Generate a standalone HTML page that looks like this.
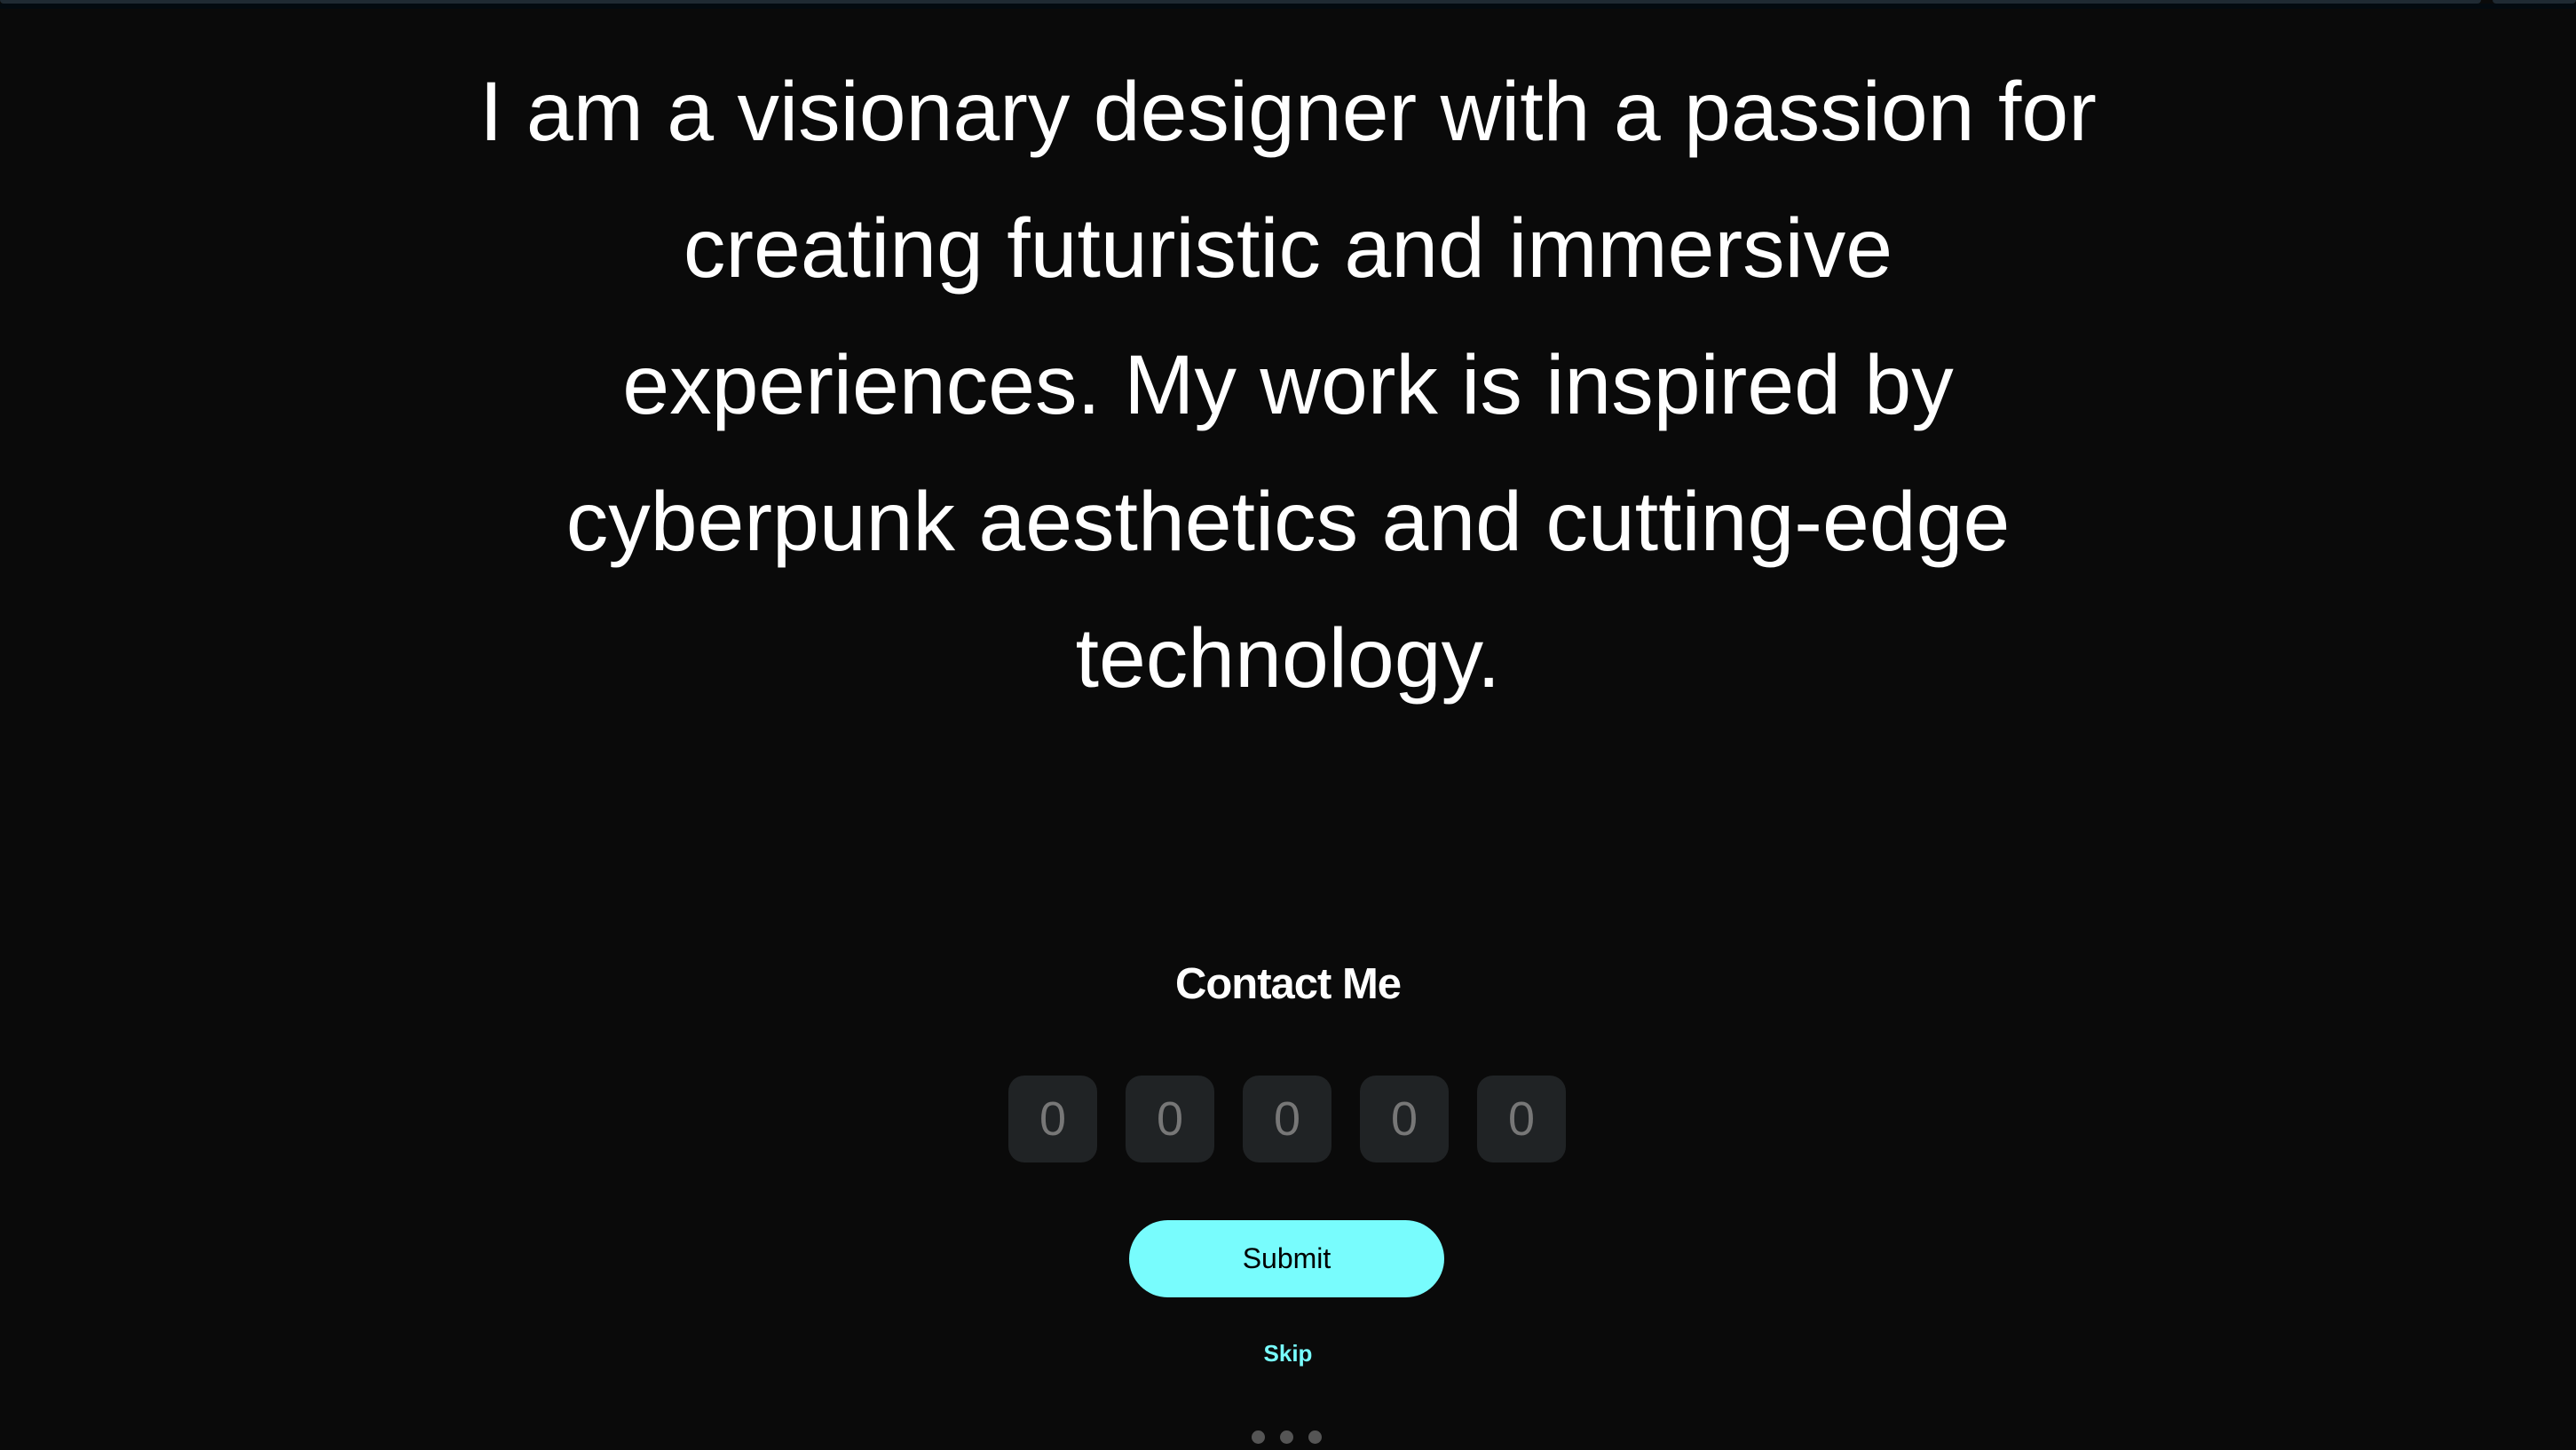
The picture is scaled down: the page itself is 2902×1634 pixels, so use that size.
<!DOCTYPE html>
<html><head><meta charset="utf-8"><style>
html,body{margin:0;padding:0;background:#0a0a0a;width:2902px;height:1634px;overflow:hidden;font-family:"Liberation Sans",sans-serif;}
.bar1{position:absolute;left:0;top:0;width:2795px;height:4px;background:#1f2a33;border-radius:0 0 6px 6px;}
.bar2{position:absolute;left:2808px;top:0;width:94px;height:4px;background:#1f2a33;border-radius:0 0 6px 6px;}
.band{position:absolute;left:0;top:4px;width:2902px;height:6px;background:#030a10;}
.p{position:absolute;left:0;top:49px;width:2902px;text-align:center;color:#fff;font-size:95px;line-height:154px;}
.h{position:absolute;left:0;top:1081px;width:2902px;text-align:center;color:#fff;font-weight:bold;font-size:49px;letter-spacing:-1px;}
.box{position:absolute;top:1212px;width:100px;height:98px;background:#202325;border-radius:18px;color:#777;font-size:54px;line-height:98px;text-align:center;}
.btn{position:absolute;left:1272px;top:1375px;width:355px;height:87px;background:#78fcfd;border-radius:44px;color:#000;font-size:32px;line-height:87px;text-align:center;}
.skip{position:absolute;left:0;top:1510px;width:2902px;text-align:center;color:#78fcfd;font-size:26px;font-weight:bold;}
.dot{position:absolute;top:1612px;width:15px;height:15px;border-radius:50%;background:#555;}
</style></head><body>
<div class="bar1"></div><div class="bar2"></div><div class="band"></div>
<div class="p">I am a visionary designer with a passion for<br>creating futuristic and immersive<br>experiences. My work is inspired by<br>cyberpunk aesthetics and cutting-edge<br>technology.</div>
<div class="h">Contact Me</div>
<div class="box" style="left:1136px">0</div>
<div class="box" style="left:1268px">0</div>
<div class="box" style="left:1400px">0</div>
<div class="box" style="left:1532px">0</div>
<div class="box" style="left:1664px">0</div>
<div class="btn">Submit</div>
<div class="skip">Skip</div>
<div class="dot" style="left:1410px"></div>
<div class="dot" style="left:1442px"></div>
<div class="dot" style="left:1474px"></div>
</body></html>
